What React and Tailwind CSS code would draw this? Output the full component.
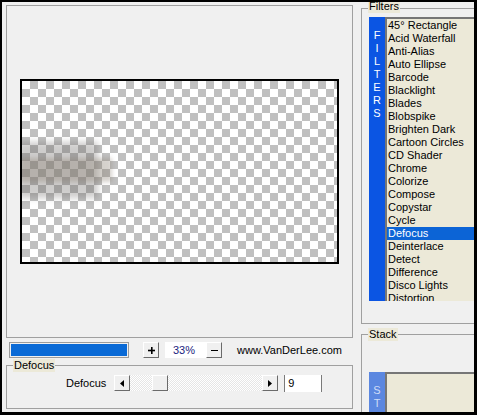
import React from "react";

const filters = [
  "45° Rectangle",
  "Acid Waterfall",
  "Anti-Alias",
  "Auto Ellipse",
  "Barcode",
  "Blacklight",
  "Blades",
  "Blobspike",
  "Brighten Dark",
  "Cartoon Circles",
  "CD Shader",
  "Chrome",
  "Colorize",
  "Compose",
  "Copystar",
  "Cycle",
  "Defocus",
  "Deinterlace",
  "Detect",
  "Difference",
  "Disco Lights",
  "Distortion",
];

// classic 3d button face
function Btn({ children, className = "" }) {
  return (
    <div
      className={
        "flex h-4 w-4 shrink-0 items-center justify-center border border-t-white border-l-white border-r-[#6b6b6b] border-b-[#6b6b6b] bg-[#f0f0f0] " +
        className
      }
    >
      {children}
    </div>
  );
}

function GroupLabel({ children, className = "top-[-7px]" }) {
  return (
    <div className={"absolute left-[6px] bg-[#ece9d8] px-[1px] leading-[13px] " + className}>
      {children}
    </div>
  );
}

export default function App() {
  return (
    <div className="h-[415px] w-[477px] overflow-hidden border-t-2 border-l-2 border-r-[3px] border-b-[3px] border-black bg-[#f0f0f0] font-['Liberation_Sans',Arial,sans-serif] text-[11px] leading-[13px] text-black">
      <div className="flex">
        {/* preview side */}
        <div className="ml-[4px] w-[347px] shrink-0">
          <div className="mt-[3px] h-[333px] border border-[#a0a0a0]">
            <div className="relative ml-[13px] mt-[73px] h-[185px] w-[319px] overflow-hidden border-2 border-black bg-[image:conic-gradient(#c0c0c0_25%,#ffffff_0_50%,#c0c0c0_0_75%,#ffffff_0)] bg-[length:16px_16px]">
              <div className="absolute left-[-4px] top-[61px] h-[56px] w-[80px] bg-[#5e5a56]/30 blur-[3px]" />
              <div className="absolute left-[-4px] top-[77px] h-[24px] w-[94px] bg-[#8a7e70]/35 blur-[2px]" />
            </div>
          </div>

          <div className="mt-[4px] flex h-4 items-center">
            <div className="ml-[3px] h-4 w-[120px] border border-[#9c9c9c] bg-[#f0f0f0] p-[1px]">
              <div className="h-full w-full bg-[#0a6ad6]" />
            </div>
            <Btn className="ml-[14px]">
              <svg width="7" height="7" viewBox="0 0 7 7">
                <rect x="3" y="0" width="1.6" height="7" fill="#000" />
                <rect x="0" y="2.7" width="7" height="1.6" fill="#000" />
              </svg>
            </Btn>
            <div className="ml-[6px] flex h-4 w-[41px] items-center bg-white pl-[8px] text-[#1a237e]">
              33%
            </div>
            <Btn>
              <svg width="7" height="7" viewBox="0 0 7 7">
                <rect x="0" y="3" width="7" height="1" fill="#000" />
              </svg>
            </Btn>
            <div className="ml-[15px]">www.VanDerLee.com</div>
          </div>

          <div className="relative mt-[7px] h-[44px] border border-[#a0a0a0]">
            <GroupLabel>Defocus</GroupLabel>
            <div className="mt-[9px] flex h-4 items-center">
              <div className="ml-[59px]">Defocus</div>
              <Btn className="ml-[8px]">
                <svg width="4" height="7" viewBox="0 0 4 7">
                  <polygon points="4,0 4,7 0,3.5" fill="#000" />
                </svg>
              </Btn>
              <div className="relative h-4 w-[132px] bg-[image:conic-gradient(#ffffff_25%,#e6e6e6_0_50%,#ffffff_0_75%,#e6e6e6_0)] bg-[length:2px_2px]">
                <div className="absolute left-[22px] top-0 h-4 w-4 border border-t-white border-l-white border-r-[#6b6b6b] border-b-[#6b6b6b] bg-[#f0f0f0]" />
              </div>
              <Btn>
                <svg width="4" height="7" viewBox="0 0 4 7">
                  <polygon points="0,0 0,7 4,3.5" fill="#000" />
                </svg>
              </Btn>
              <div className="ml-[6px] flex h-[17px] w-[38px] items-center border-x border-[#7a7a7a] bg-white pl-[3px]">
                9
              </div>
            </div>
          </div>
        </div>

        {/* filter side */}
        <div className="ml-[8px] w-[140px] shrink-0">
          <div className="relative mt-[6px] h-[316px] border border-r-0 border-[#a0a0a0]">
            <GroupLabel className="top-[-9px]">Filters</GroupLabel>
            <div className="ml-[7px] mt-[8px] flex h-[284px]">
              <div className="flex w-4 shrink-0 flex-col items-center bg-[#0b55e3] pt-[12px] text-white">
                {["F", "I", "L", "T", "E", "R", "S"].map((c) => (
                  <div key={c} className="h-[13px]">
                    {c}
                  </div>
                ))}
              </div>
              <div className="flex-1 overflow-hidden border-l-2 border-t-2 border-[#767676] bg-[#ece9d8]">
                {filters.map((f) => (
                  <div
                    key={f}
                    className={
                      f === "Defocus"
                        ? "h-[13px] whitespace-nowrap bg-[#0c64d6] pl-[1px] text-white"
                        : "h-[13px] whitespace-nowrap pl-[1px]"
                    }
                  >
                    {f}
                  </div>
                ))}
              </div>
            </div>
          </div>

          <div className="relative mt-[10px] h-[120px] border border-r-0 border-[#a0a0a0]">
            <GroupLabel>Stack</GroupLabel>
            <div className="ml-[7px] mt-[37px] flex h-[60px]">
              <div className="flex w-4 shrink-0 flex-col items-center bg-[#5b87e0] pt-[12px] text-[#cfdcf7]">
                <div className="h-[13px]">S</div>
                <div className="h-[13px]">T</div>
              </div>
              <div className="flex-1 border-l-2 border-t-2 border-[#767676] bg-[#ece9d8]" />
            </div>
          </div>
        </div>
      </div>
    </div>
  );
}
